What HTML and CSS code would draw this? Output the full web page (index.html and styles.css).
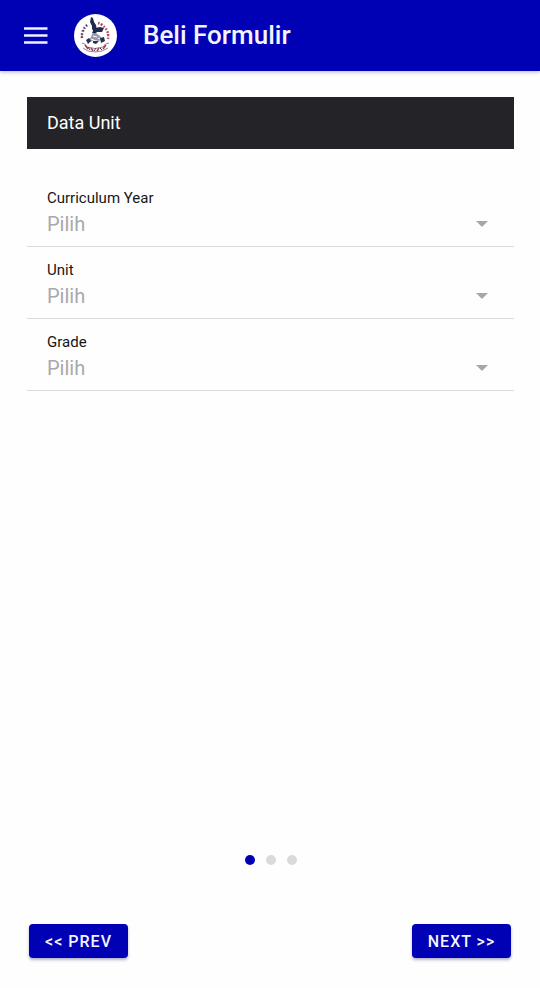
FILE: index.html
```html
<!DOCTYPE html>
<html lang="id">
<head>
    <meta charset="UTF-8">
    <meta name="viewport" content="width=device-width, initial-scale=1.0">
    <title>Beli Formulir</title>
    <link rel="stylesheet" href="styles.css">
</head>
<body>
    <header class="toolbar">
        <button type="button" class="menu-button" aria-label="Menu">
            <svg width="24" height="17" viewBox="0 0 24 17" aria-hidden="true">
                <path d="M0 1.500h23.500M0 8.500h23.500M0 15.500h23.500" fill="none" stroke="#f0f0ff" stroke-width="2.500"/>
            </svg>
        </button>
        <svg class="logo" viewBox="0 0 43 43" role="img" aria-label="Logo">
            <circle cx="21.5" cy="21.5" r="21.5" fill="#fff"/>
            <!-- ring of lettering -->
            <path d="M8 24A14 14 0 0 1 14 10.500" fill="none" stroke="#5a4870" stroke-width="2.500" stroke-dasharray="1.600 1.600"/>
            <path d="M24 9A14 14 0 0 1 34 25" fill="none" stroke="#b9566a" stroke-width="2.500" stroke-dasharray="1.700 1.500"/>
            <path d="M8 21.500v2M9 16l1 1M27 10l1 1M34 20v1" stroke="#b52c3d" stroke-width="1.500"/>
            <!-- bird -->
            <path d="M17 3l2 1 1 4 2 3 1 6-3 1-2-3 0-3-2-4z" fill="#202a4d"/>
            <path d="M21 14l5-1 4 1-2 4-5 0-2 2-3-1 2-4z" fill="#202a4d"/>
            <path d="M18 20l4-1 4 3 2 3-3 2-5-1-4 2-2-2 3-3z" fill="#9a9aae"/>
            <path d="M12 26l3-2 2 3-3 3zM26 24l4-1 1 4-4 2zM19 27l6 0-3 3-3-1z" fill="#29304f"/>
            <path d="M19 22l4 1M17 25l3 1M24 24l2 1" stroke="#fff" stroke-width="1"/>
            <!-- ribbon -->
            <path d="M8 29q3 0 5 4q8 3 16 0q2-4 6-4M9 34l5 3q7 2 14 0l6-3" fill="none" stroke="#8887a5" stroke-width="1"/>
            <path d="M11 31l3 4M17 34l2 3M23 37l2-3M29 35l3-4" stroke="#bc3446" stroke-width="1.500"/>
            <path d="M14 33l2 3M20 37l2-3M26 34l2 2" stroke="#343c68" stroke-width="1"/>
        </svg>
        <h1>Beli Formulir</h1>
    </header>

    <form class="content">
        <h2 class="section-title">Data Unit</h2>

        <div class="fields">
            <div class="field">
                <label for="year">Curriculum Year</label>
                <select id="year">
                    <option value="">Pilih</option>
                </select>
            </div>
            <div class="field">
                <label for="unit">Unit</label>
                <select id="unit">
                    <option value="">Pilih</option>
                </select>
            </div>
            <div class="field">
                <label for="grade">Grade</label>
                <select id="grade">
                    <option value="">Pilih</option>
                </select>
            </div>
        </div>

        <div class="pager">
            <span class="dot active"></span>
            <span class="dot"></span>
            <span class="dot"></span>
        </div>

        <div class="actions">
            <button type="button" class="nav-button">&lt;&lt; PREV</button>
            <button type="button" class="nav-button">NEXT &gt;&gt;</button>
        </div>
    </form>
</body>
</html>
```

FILE: styles.css
```css
:root {
    --primary: #0000b5;
    --dark: #242327;
    --line: #dadada;
    --muted: #a9a9ad;
}

* {
    margin: 0;
    padding: 0;
    box-sizing: border-box;
    font-family: Roboto, sans-serif;
}

body {
    min-height: 100vh;
    display: flex;
    flex-direction: column;
    background: #fefefe;
}

.toolbar {
    display: flex;
    align-items: center;
    height: 71px;
    padding: 0 24px;
    background: var(--primary);
    box-shadow: 0 1px 4px rgba(0, 0, 100, 0.3);
}

.menu-button {
    display: flex;
    border: none;
    background: none;
    cursor: pointer;
}

.logo {
    width: 43px;
    height: 43px;
    margin: 0 26px;
}

h1 {
    font-size: 26px;
    font-weight: 500;
    line-height: 30px;
    padding-bottom: 1px;
    color: #f4f4ff;
}

.content {
    flex: 1;
    display: flex;
    flex-direction: column;
    padding: 26px 26px 30px 27px;
}

.section-title {
    padding: 0 20px;
    background: var(--dark);
    color: #fff;
    font-size: 18px;
    font-weight: 400;
    line-height: 52px;
    margin-bottom: 26px;
}

.field {
    height: 72px;
    padding: 13px 20px 0;
    border-bottom: 1px solid var(--line);
}

.field label {
    display: block;
    font-size: 15px;
    line-height: 20px;
    color: #161616;
}

.field select {
    display: block;
    width: 100%;
    height: 31px;
    appearance: none;
    border: none;
    outline: none;
    font-size: 20px;
    color: var(--muted);
    background: url("data:image/svg+xml,%3Csvg xmlns='http://www.w3.org/2000/svg' width='12' height='6'%3E%3Cpath d='M0 0h12L6 6z' fill='%23a6a6a6'/%3E%3C/svg%3E") no-repeat right 6px center;
}

.pager {
    display: flex;
    justify-content: center;
    gap: 11px;
    margin-top: auto;
    margin-bottom: 59px;
}

.dot {
    width: 10px;
    height: 10px;
    border-radius: 50%;
    background: #dadada;
}

.dot.active {
    background: var(--primary);
}

.actions {
    display: flex;
    justify-content: space-between;
    padding: 0 3px 0 2px;
}

.nav-button {
    width: 99px;
    height: 34px;
    border: none;
    border-radius: 4px;
    background: var(--primary);
    color: #f4f4ff;
    font-size: 16px;
    font-weight: 500;
    letter-spacing: 1px;
    box-shadow: 0 2px 3px rgba(0, 0, 80, 0.3);
    cursor: pointer;
}
```
